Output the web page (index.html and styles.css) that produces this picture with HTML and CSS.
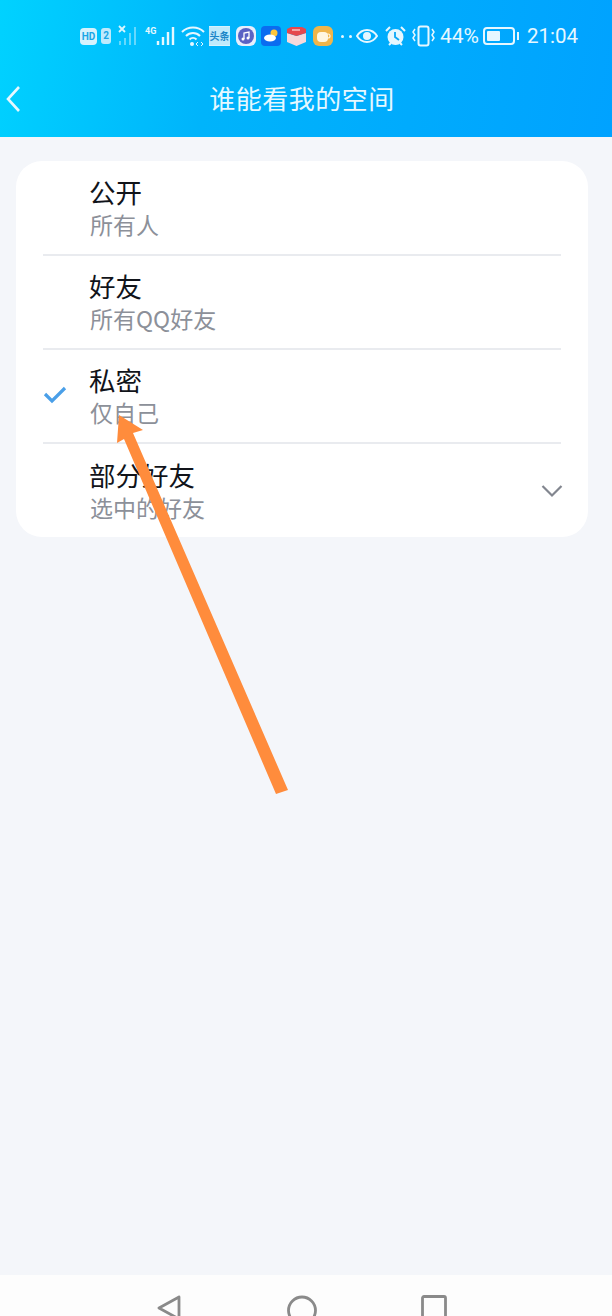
FILE: index.html
```html
<!DOCTYPE html>
<html lang="zh-CN">
<head>
  <meta charset="UTF-8">
  <meta name="viewport" content="width=device-width, initial-scale=1.0">
  <title>谁能看我的空间</title>
  <link rel="stylesheet" href="styles.css">
</head>
<body>

<div class="screen">
  <header class="top">
    <div class="status">
      <span class="hd">HD</span>
      <span class="sim">2</span>
      <svg class="sig-off" width="20" height="22" viewBox="0 0 20 22">
        <path d="M1 1l6 6M7 1L1 7" stroke="#fff" stroke-width="1.8" opacity=".85"/>
        <path d="M2 16v4M7 13v7M12 8v12M17 2v18" stroke="#fff" stroke-width="2" opacity=".4"/>
      </svg>
      <span class="sig-on">
        <span class="four-g">4G</span>
        <svg width="20" height="20" viewBox="0 0 20 20">
          <path d="M2 15v4M7 11v8M12 6v13M17 1v18" stroke="#e6f7ff" stroke-width="2.4"/>
        </svg>
      </span>
      <svg class="wifi" width="24" height="22" viewBox="0 0 24 22" fill="none" stroke="#e6f7ff" stroke-width="2">
        <path d="M1 7c6-6 16-6 22 0M5 11c4-4 10-4 14 0M8.500 14.500c2-2 5-2 7 0"/>
        <circle cx="11" cy="19" r="2" fill="#e6f7ff" stroke="none"/>
        <path d="M17 17l-2 2 2 2M20 17l2 2-2 2" stroke-width="1"/>
      </svg>
      <span class="toutiao">头条</span>
      <svg class="app" width="20" height="20" viewBox="0 0 20 20">
        <rect width="20" height="20" rx="6" fill="#e8eefc"/>
        <circle cx="10" cy="10" r="8" fill="#5a62c4"/>
        <path d="M8 13V7l5-1v6" stroke="#fff" stroke-width="1.300" fill="none"/>
        <circle cx="7" cy="13" r="1.500" fill="#fff"/>
        <circle cx="12" cy="12" r="1.500" fill="#fff"/>
      </svg>
      <svg class="app" width="20" height="20" viewBox="0 0 20 20">
        <rect width="20" height="20" rx="4" fill="#0a6cf0"/>
        <circle cx="13" cy="7" r="3.500" fill="#ffc53d"/>
        <ellipse cx="9" cy="12" rx="6" ry="3.500" fill="#fff"/>
      </svg>
      <svg class="app" width="21" height="20" viewBox="0 0 21 20">
        <path d="M1 7l9.500 3L20 7v9l-9.500 4L1 16z" fill="#f7d9dc"/>
        <path d="M1 3l4-2h11l4 2v4l-9.500 3L1 7z" fill="#e5484f"/>
        <path d="M6 4h8" stroke="#fff" stroke-width="1"/>
      </svg>
      <svg class="app cup" width="20" height="20" viewBox="0 0 20 20">
        <rect width="20" height="20" rx="6" fill="#f0b54a"/>
        <rect x="4" y="6" width="11" height="10" rx="4" fill="#fff6e0"/>
        <circle cx="15" cy="10" r="2" fill="none" stroke="#fff6e0" stroke-width="1.200"/>
      </svg>
      <span class="dots"><i></i><i></i></span>
      <svg class="eye" width="22" height="16" viewBox="0 0 22 16">
        <path d="M1 8c5-8 15-8 20 0-5 8-15 8-20 0z" fill="none" stroke="#e6f7ff" stroke-width="2"/>
        <circle cx="11" cy="8" r="4" fill="#e6f7ff"/>
      </svg>
      <svg class="alarm" width="21" height="22" viewBox="0 0 21 22">
        <circle cx="10.500" cy="12" r="8" fill="#e6f7ff"/>
        <path d="M10 7v5l4 3" stroke="#0aa6f5" stroke-width="1.800" fill="none"/>
        <path d="M1 6l4-4M20 6l-4-4M4 20l2-2M17 20l-2-2" stroke="#e6f7ff" stroke-width="2"/>
      </svg>
      <svg class="vibrate" width="23" height="22" viewBox="0 0 23 22" fill="none" stroke="#e6f7ff">
        <rect x="6.500" y="1.500" width="10" height="19" rx="2" stroke-width="2"/>
        <path d="M3 4L1 7l2 3-2 3 2 3M20 4l2 3-2 3 2 3-2 3" stroke-width="1.500"/>
      </svg>
      <span class="pct">44%</span>
      <span class="battery"><i></i></span>
      <span class="clock">21:04</span>
    </div>
    <div class="bar">
      <svg class="back" width="16" height="28" viewBox="0 0 16 28">
        <path d="M14 2L3 14l11 12" fill="none" stroke="#e6f8ff" stroke-width="2.600"/>
      </svg>
      <h1>谁能看我的空间</h1>
    </div>
  </header>

  <div class="card">
    <div class="row">
      <div class="tick"></div>
      <div class="labels">
        <div class="name">公开</div>
        <div class="sub">所有人</div>
      </div>
    </div>
    <div class="row">
      <div class="tick"></div>
      <div class="labels">
        <div class="name">好友</div>
        <div class="sub">所有QQ好友</div>
      </div>
    </div>
    <div class="row">
      <div class="tick">
        <svg width="24" height="18" viewBox="0 0 24 18">
          <path d="M2 8l7 7L22 2" fill="none" stroke="#4a9fe8" stroke-width="3.200"/>
        </svg>
      </div>
      <div class="labels">
        <div class="name">私密</div>
        <div class="sub">仅自己</div>
      </div>
    </div>
    <div class="row">
      <div class="tick"></div>
      <div class="labels">
        <div class="name">部分好友</div>
        <div class="sub">选中的好友</div>
      </div>
      <svg class="chev" width="22" height="14" viewBox="0 0 22 14">
        <path d="M1.500 2L11 11.500 20.500 2" fill="none" stroke="#82868f" stroke-width="2.200"/>
      </svg>
    </div>
  </div>

  <nav class="nav">
    <svg width="26" height="24" viewBox="0 0 26 24">
      <path d="M23 2L3 13l20 11z" fill="none" stroke="#8a8a8a" stroke-width="2.800" stroke-linejoin="round"/>
    </svg>
    <svg width="31" height="24" viewBox="0 0 31 24">
      <circle cx="16" cy="15.500" r="13.500" fill="none" stroke="#8a8a8a" stroke-width="2.800"/>
    </svg>
    <svg width="26" height="24" viewBox="0 0 26 24">
      <path d="M1.500 28V3a1.500 1.500 0 0 1 1.500-1.500h20A1.500 1.500 0 0 1 24.500 3v25" fill="none" stroke="#8a8a8a" stroke-width="2.800"/>
    </svg>
  </nav>

  <svg class="arrow" width="612" height="1316" viewBox="0 0 612 1316">
    <polygon points="119,415 143,430 133,433 288,790 276,794 124,439 117,443" fill="#ff8c3c"/>
  </svg>
</div>

</body>
</html>
```

FILE: styles.css
```css
* {
  box-sizing: border-box;
}

body {
  margin: 0;
  padding: 0;
  font-family: "Noto Sans CJK SC", Roboto, sans-serif;
  background-color: #f4f6fa;
}

.screen {
  position: relative;
  width: 612px;
  height: 1316px;
  overflow: hidden;
  display: flex;
  flex-direction: column;
  background-color: #f4f6fa;
}

.top {
  height: 137px;
  flex: none;
  background: linear-gradient(100deg, #00d2ff 0%, #00b4fb 35%, #00a2ff 100%);
  color: #e6f8ff;
}

/* status bar */
.status {
  height: 60px;
  padding: 12px 0 0 80px;
  display: flex;
  align-items: center;
}

.hd {
  width: 17px;
  height: 17px;
  border-radius: 4px;
  background-color: #d5f2fd;
  color: #1aa6e6;
  font: bold 10px/17px Roboto, sans-serif;
  text-align: center;
}

.sim {
  width: 10px;
  height: 16px;
  margin-left: 4px;
  border-radius: 3px;
  background-color: #bfeafc;
  color: #1aa6e6;
  font: bold 10px/16px Roboto, sans-serif;
  text-align: center;
}

.sig-off {
  margin-left: 7px;
}

.sig-on {
  margin-left: 7px;
  width: 31px;
  display: flex;
  align-items: flex-end;
}

.four-g {
  width: 11px;
  align-self: flex-start;
  font: bold 9px/10px Roboto, sans-serif;
}

.wifi {
  margin-left: 5px;
}

.toutiao {
  width: 21px;
  height: 20px;
  margin: 0 1px 0 4px;
  border-top: 1px solid #d5f2fd;
  border-bottom: 1px solid #d5f2fd;
  background-color: #bfeafc;
  color: #1b86c8;
  font: bold 10px/18px "Noto Sans CJK SC", sans-serif;
  text-align: center;
  white-space: nowrap;
}

.app {
  margin-left: 5px;
}

.cup {
  margin-left: 6px;
}

.dots {
  margin-left: 8px;
  width: 11px;
  display: flex;
  justify-content: space-between;
  align-items: center;
}

.dots i {
  width: 3px;
  height: 3px;
  border-radius: 50%;
  background-color: #e6f7ff;
}

.eye {
  margin-left: 4px;
}

.alarm {
  margin-left: 7px;
}

.vibrate {
  margin-left: 6px;
}

.pct {
  margin-left: 5px;
  width: 38px;
  font: 21px/24px Roboto, sans-serif;
  white-space: nowrap;
}

.battery {
  position: relative;
  margin-left: 5px;
  width: 32px;
  height: 18px;
  padding: 2px;
  border: 2px solid #e6f7ff;
  border-radius: 4px;
}

.battery i {
  display: block;
  width: 13px;
  height: 100%;
  border-radius: 1px;
  background-color: #e6f7ff;
}

.battery::after {
  content: "";
  position: absolute;
  right: -6px;
  top: 3px;
  width: 2px;
  height: 8px;
  background-color: #e6f7ff;
}

.clock {
  margin-left: 12px;
  font: 20.500px/24px Roboto, sans-serif;
}

/* title bar */
.bar {
  position: relative;
  height: 77px;
  display: flex;
  justify-content: center;
  align-items: flex-start;
}

.bar h1 {
  margin: 19px 8px 0 0;
  font-size: 26px;
  line-height: 38px;
  font-weight: 400;
  letter-spacing: 0.500px;
}

.back {
  position: absolute;
  left: 5px;
  top: 25px;
}

/* option list */
.card {
  margin: 24px 24px 0 16px;
  padding: 1px 27px 0;
  background-color: #fff;
  border-radius: 26px;
}

.row {
  height: 94px;
  display: flex;
  align-items: center;
  border-bottom: 2px solid #e9ebef;
}

.row:last-child {
  height: 93px;
  border-bottom: none;
}

.tick {
  width: 47px;
  flex: none;
  padding-bottom: 2px;
  display: flex;
}

.labels {
  padding-bottom: 2px;
  margin-left: -1px;
}

.name {
  font-size: 26.500px;
  line-height: 34px;
  color: #11141a;
}

.sub {
  margin-left: 1px;
  font-size: 23px;
  line-height: 30px;
  color: #8c9099;
  white-space: nowrap;
}

.chev {
  margin: 1px -2px 0 auto;
}

/* android nav */
.nav {
  margin-top: auto;
  height: 41px;
  flex: none;
  padding: 20px 0 0 156px;
  display: flex;
  gap: 104px;
  background-color: #fdfdfd;
}

.arrow {
  position: absolute;
  left: 0;
  top: 0;
  pointer-events: none;
}
```
